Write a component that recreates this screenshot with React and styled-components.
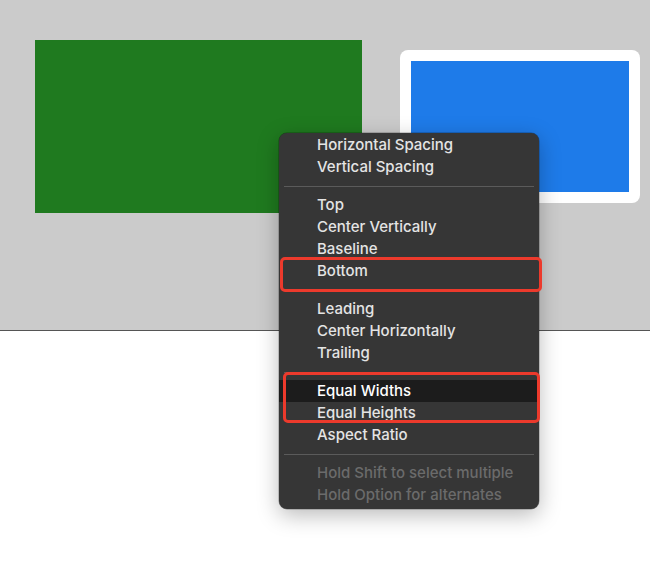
import React from "react";
import styled, { createGlobalStyle } from "styled-components";

const Global = createGlobalStyle`
  html, body { margin: 0; padding: 0; background: #ffffff; }
  body { width: 650px; height: 563px; overflow: hidden; font-family: Inter, "Liberation Sans", sans-serif; }
`;

const Page = styled.div`
  position: relative;
  width: 650px;
  height: 563px;
  background: #ffffff;
`;

const Canvas = styled.div`
  box-sizing: border-box;
  height: 331px;
  background: #cbcbcb;
  border-bottom: 1px solid #555555;
  display: flex;
  align-items: flex-start;
  gap: 38px;
  padding: 40px 0 0 35px;
`;

const GreenView = styled.div`
  width: 327px;
  height: 173px;
  background: #1f7a1f;
`;

const SelectedFrame = styled.div`
  box-sizing: border-box;
  margin-top: 10px;
  width: 240px;
  height: 153px;
  padding: 11px;
  background: #ffffff;
  border-radius: 8px;
`;

const BlueView = styled.div`
  width: 100%;
  height: 100%;
  background: #1e7be9;
`;

const Menu = styled.div`
  position: absolute;
  left: 279px;
  top: 133px;
  width: 260px;
  box-sizing: border-box;
  padding: 1px 0 3px;
  background: #363636;
  border-radius: 8px;
  box-shadow: 0 6px 22px rgba(0, 0, 0, 0.28), 0 0 0 0.5px rgba(0, 0, 0, 0.35);
  display: flex;
  flex-direction: column;
`;

const Item = styled.div`
  height: 22px;
  line-height: 22px;
  padding-left: 38px;
  font-size: 15px;
  font-weight: 500;
  color: ${(p) => (p.$disabled ? "#6b6b6b" : p.$active ? "#ffffff" : "#e4e4e4")};
  background: ${(p) => (p.$active ? "#1c1c1c" : "transparent")};
  white-space: nowrap;
`;

const Separator = styled.div`
  height: 16px;
  display: flex;
  align-items: center;
  padding: 0 5px;
  &::after {
    content: "";
    flex: 1;
    height: 1px;
    background: #5b5b5b;
  }
`;

const Callout = styled.div`
  position: absolute;
  box-sizing: border-box;
  left: ${(p) => p.$left}px;
  top: ${(p) => p.$top}px;
  width: ${(p) => p.$width}px;
  height: ${(p) => p.$height}px;
  border: 3px solid #ec3a2c;
  border-radius: 5px;
  pointer-events: none;
`;

const groups = [
  [{ label: "Horizontal Spacing" }, { label: "Vertical Spacing" }],
  [{ label: "Top" }, { label: "Center Vertically" }, { label: "Baseline" }, { label: "Bottom" }],
  [{ label: "Leading" }, { label: "Center Horizontally" }, { label: "Trailing" }],
  [{ label: "Equal Widths", active: true }, { label: "Equal Heights" }, { label: "Aspect Ratio" }],
  [
    { label: "Hold Shift to select multiple", disabled: true },
    { label: "Hold Option for alternates", disabled: true },
  ],
];

export default function App() {
  return (
    <>
      <Global />
      <Page>
        <Canvas>
          <GreenView />
          <SelectedFrame>
            <BlueView />
          </SelectedFrame>
        </Canvas>
        <Menu>
          {groups.map((g, gi) => (
            <React.Fragment key={gi}>
              {gi > 0 && <Separator />}
              {g.map((it) => (
                <Item key={it.label} $active={it.active} $disabled={it.disabled}>
                  {it.label}
                </Item>
              ))}
            </React.Fragment>
          ))}
          <Callout $left={1} $top={124} $width={262} $height={35} />
          <Callout $left={4} $top={239} $width={257} $height={51} />
        </Menu>
      </Page>
    </>
  );
}
